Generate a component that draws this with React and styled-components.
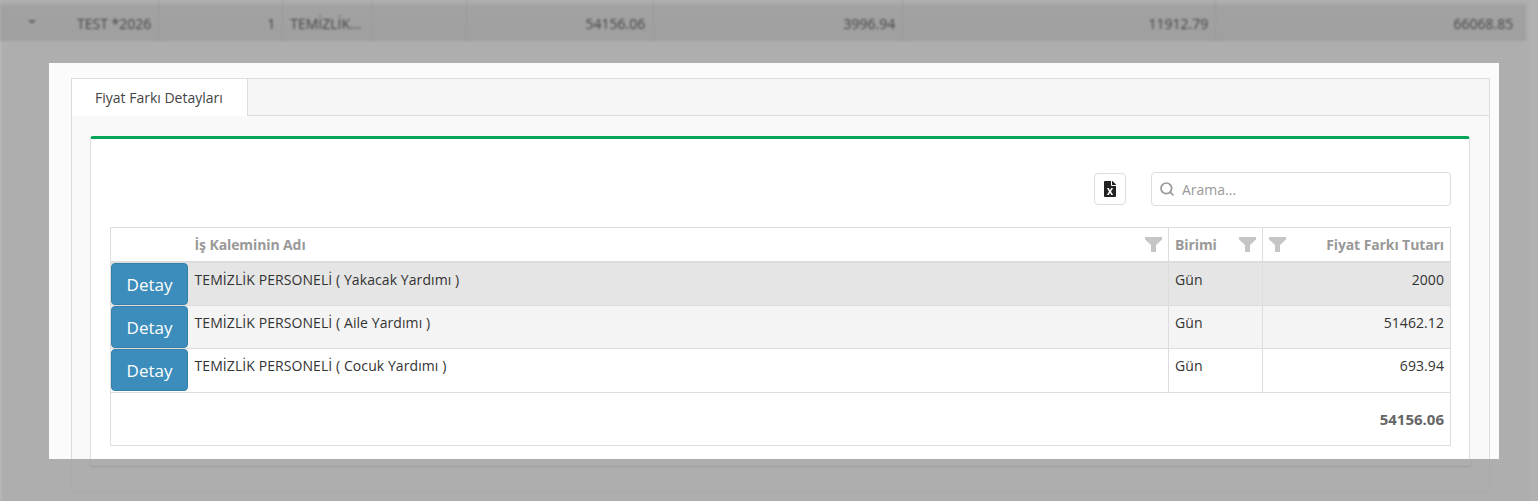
import React from "react";
import styled, { createGlobalStyle } from "styled-components";
import { FaFileExcel } from "react-icons/fa";
import { Search } from "lucide-react";

const GlobalStyle = createGlobalStyle`
    html, body {
        margin: 0;
        padding: 0;
        height: 100%;
        overflow: hidden;
        font-family: "Open Sans", "Liberation Sans", sans-serif;
        font-size: 14px;
        color: #333;
    }
`

const Page = styled.div`
    position: relative;
    width: 1538px;
    height: 501px;
    overflow: hidden;
`

const Backdrop = styled.div`
    height: 100%;
    background-color: #aeaeae;
    box-shadow: inset -8px 0 0 #b1b1b1, inset 2px 0 0 #b5b5b5;
`

const BackRow = styled.div`
    display: flex;
    width: 1526px;
    height: 41px;
    background: linear-gradient(#b4b4b4 0, #a2a2a2 6px, #a0a0a0 100%);
    filter: blur(0.9px);
    color: #444;
`

const BackCell = styled.div`
    position: relative;
    flex: 0 0 ${props => props.$width}px;
    box-sizing: border-box;
    padding: 15px ${props => props.$padRight || 7}px 0 ${props => props.$padLeft || 7}px;
    border-right: 1px solid #999;
    line-height: 18px;
    font-size: 14px;
    white-space: nowrap;
    text-align: ${props => props.$right ? "right" : "left"};
    &:last-child {
        border-right: none;
    }
`

const Caret = styled.span`
    position: absolute;
    left: 28px;
    top: 20px;
    border-left: 4px solid transparent;
    border-right: 4px solid transparent;
    border-top: 4px solid #666;
`

const GhostTabs = styled.div`
    box-sizing: border-box;
    width: 1419px;
    height: 415px;
    margin: 36px 0 0 71px;
    padding: 58px 18px 0;
    border: 1px solid #aaa;
`

const GhostCard = styled.div`
    height: 328px;
    border: 1px solid #ababab;
    border-radius: 3px;
    box-shadow: 0 1px 2px rgba(0, 0, 0, 0.1);
`

const Modal = styled.div`
    position: absolute;
    left: 49px;
    top: 63px;
    box-sizing: border-box;
    width: 1450px;
    height: 396px;
    padding: 15px 9px 0 22px;
    overflow: hidden;
    background-color: #fbfbfb;
`

const TabBox = styled.div`
    border: 1px solid #ddd;
    background-color: #f9f9f9;
    height: 500px;
`

const TabStrip = styled.div`
    display: flex;
    height: 36px;
    background-color: #f6f6f6;
    border-bottom: 1px solid #ddd;
`

const Tab = styled.div`
    box-sizing: border-box;
    width: 176px;
    height: 37px;
    padding: 10px 0 0 23px;
    background-color: #fff;
    border-right: 1px solid #ddd;
    font-size: 14px;
    line-height: 18px;
    color: #444;
`

const TabPanel = styled.div`
    padding: 20px 19px 0 18px;
`

const Card = styled.div`
    box-sizing: border-box;
    height: 330px;
    padding: 33px 18px 0 19px;
    background-color: #fff;
    border: 1px solid #ddd;
    border-top: 3px solid #00a65a;
    border-radius: 3px;
`

const Toolbar = styled.div`
    display: flex;
    justify-content: flex-end;
    align-items: center;
    gap: 25px;
    height: 34px;
    margin-bottom: 21px;
`

const ExportButton = styled.button`
    display: flex;
    align-items: center;
    justify-content: center;
    width: 32px;
    height: 32px;
    padding: 0;
    background-color: #fff;
    border: 1px solid #ddd;
    border-radius: 4px;
    color: #222;
    font-size: 16px;
`

const SearchBox = styled.div`
    box-sizing: border-box;
    display: flex;
    align-items: center;
    gap: 7px;
    width: 300px;
    height: 34px;
    padding-left: 7px;
    background-color: #fff;
    border: 1px solid #ddd;
    border-radius: 4px;
    color: #999;
`

const SearchInput = styled.input`
    flex: 1;
    border: none;
    outline: none;
    padding: 0;
    background: transparent;
    font-family: inherit;
    font-size: 14px;
    color: #333;
    &::placeholder {
        color: #999;
        opacity: 1;
    }
`

const Table = styled.table`
    width: 1340px;
    table-layout: fixed;
    border-collapse: collapse;
    border: 1px solid #ddd;
`

const HeadCell = styled.th`
    position: relative;
    height: 33px;
    padding: 0 6px;
    border-bottom: 2px solid #ddd;
    border-left: ${props => props.$divider ? "1px solid #ddd" : "none"};
    text-align: ${props => props.$right ? "right" : "left"};
    font-size: 14px;
    font-weight: 700;
    letter-spacing: -0.1px;
    color: #999;
`

const FunnelIcon = styled.svg`
    position: absolute;
    top: 9px;
    ${props => props.$left ? "left: 6px;" : "right: 6px;"}
    width: 17px;
    height: 15px;
    fill: #c5c5c5;
`

const Row = styled.tr`
    background-color: ${props => props.$tone};
`

const Cell = styled.td`
    height: ${props => props.$height}px;
    box-sizing: border-box;
    padding: 7px 6px 0;
    vertical-align: top;
    border-top: 1px solid #ddd;
    border-left: ${props => props.$divider ? "1px solid #ddd" : "none"};
    text-align: ${props => props.$right ? "right" : "left"};
    line-height: 20px;
    font-size: 14px;
    letter-spacing: 0.08px;
    color: #333;
`

const ButtonCell = styled.td`
    padding: 0;
    border-top: 1px solid #ddd;
    vertical-align: top;
`

const DetailButton = styled.button`
    display: block;
    width: 77px;
    height: 42px;
    padding: 0;
    background-color: #3c8dbc;
    border: 1px solid #367fa9;
    border-radius: 4px;
    color: #fff;
    font-family: inherit;
    font-size: 17px;
`

const TotalCell = styled.td`
    height: 52px;
    padding: 0 6px;
    border-top: 1px solid #ddd;
    text-align: right;
    font-size: 15px;
    font-weight: 700;
    color: #666;
`

const backCells = [
    { width: 159, padLeft: 77, text: "TEST *2026", caret: true },
    { width: 124, right: true, text: "1" },
    { width: 89, text: "TEMİZLİK..." },
    { width: 95, text: "" },
    { width: 187, right: true, padRight: 8, text: "54156.06" },
    { width: 249, right: true, text: "3996.94" },
    { width: 313, right: true, text: "11912.79" },
    { width: 310, right: true, padRight: 13, text: "66068.85" },
]

const rows = [
    { name: "TEMİZLİK PERSONELİ ( Yakacak Yardımı )", amount: "2000", tone: "#e5e5e5", height: 42 },
    { name: "TEMİZLİK PERSONELİ ( Aile Yardımı )", amount: "51462.12", tone: "#f4f4f4", height: 42 },
    { name: "TEMİZLİK PERSONELİ ( Cocuk Yardımı )", amount: "693.94", tone: "#fff", height: 44 },
]

function Funnel({ left }) {
    return (
        <FunnelIcon $left={left} viewBox="0 0 17 15">
            <path d="M0 0H17V2.5L11 8V15H6V8L0 2.5Z" />
        </FunnelIcon>
    )
}

function App() {
    return (
        <Page>
            <GlobalStyle />
            <Backdrop>
                <BackRow>
                    {backCells.map((cell, i) => (
                        <BackCell
                            key={i}
                            $width={cell.width}
                            $right={cell.right}
                            $padLeft={cell.padLeft}
                            $padRight={cell.padRight}
                        >
                            {cell.caret && <Caret />}
                            {cell.text}
                        </BackCell>
                    ))}
                </BackRow>
                <GhostTabs>
                    <GhostCard />
                </GhostTabs>
            </Backdrop>
            <Modal>
                <TabBox>
                    <TabStrip>
                        <Tab>Fiyat Farkı Detayları</Tab>
                    </TabStrip>
                    <TabPanel>
                        <Card>
                            <Toolbar>
                                <ExportButton><FaFileExcel /></ExportButton>
                                <SearchBox>
                                    <Search size={16} strokeWidth={2.6} />
                                    <SearchInput placeholder="Arama..." />
                                </SearchBox>
                            </Toolbar>
                            <Table>
                                <colgroup>
                                    <col style={{width: "78px"}} />
                                    <col style={{width: "980px"}} />
                                    <col style={{width: "94px"}} />
                                    <col style={{width: "188px"}} />
                                </colgroup>
                                <thead>
                                    <tr>
                                        <HeadCell />
                                        <HeadCell>İş Kaleminin Adı<Funnel /></HeadCell>
                                        <HeadCell $divider>Birimi<Funnel /></HeadCell>
                                        <HeadCell $divider $right><Funnel left />Fiyat Farkı Tutarı</HeadCell>
                                    </tr>
                                </thead>
                                <tbody>
                                    {rows.map(row => (
                                        <Row key={row.name} $tone={row.tone}>
                                            <ButtonCell><DetailButton>Detay</DetailButton></ButtonCell>
                                            <Cell $height={row.height}>{row.name}</Cell>
                                            <Cell $height={row.height} $divider>Gün</Cell>
                                            <Cell $height={row.height} $divider $right>{row.amount}</Cell>
                                        </Row>
                                    ))}
                                    <tr>
                                        <TotalCell colSpan={4}>54156.06</TotalCell>
                                    </tr>
                                </tbody>
                            </Table>
                        </Card>
                    </TabPanel>
                </TabBox>
            </Modal>
        </Page>
    )
}

export default App
